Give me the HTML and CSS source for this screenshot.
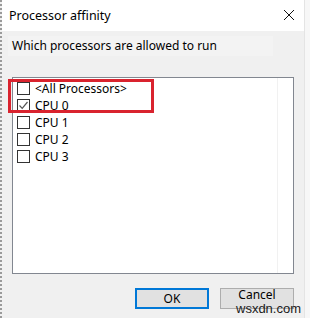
FILE: index.html
```html
<!DOCTYPE html>
<html lang="en">
<head>
    <meta charset="UTF-8">
    <title>Processor affinity</title>
    <link rel="stylesheet" href="styles.css">
</head>
<body>
    <div class="window">
        <div class="titlebar">
            <span class="title">Processor affinity</span>
            <svg class="close" width="12" height="12" viewBox="0 0 12 12">
                <path d="M1 1 L11 11 M11 1 L1 11" stroke="#111" stroke-width="1" fill="none"/>
            </svg>
        </div>
        <div class="label">Which processors are allowed to run</div>
        <div class="listbox">
            <div class="item"><span class="check"></span>&lt;All Processors&gt;</div>
            <div class="item">
                <span class="check">
                    <svg width="11" height="11" viewBox="0 0 11 11">
                        <path d="M1.5 5.5 L4.2 8.3 L9.5 2" stroke="#555" stroke-width="1.2" fill="none"/>
                    </svg>
                </span>CPU 0
            </div>
            <div class="item"><span class="check"></span>CPU 1</div>
            <div class="item"><span class="check"></span>CPU 2</div>
            <div class="item"><span class="check"></span>CPU 3</div>
            <div class="divider"></div>
        </div>
        <div class="buttons">
            <button class="btn default">OK</button>
            <button class="btn"><span class="btn-text">Cancel</span></button>
        </div>
        <div class="highlight"></div>
        <div class="watermark">wsxdn.com</div>
    </div>
</body>
</html>
```

FILE: styles.css
```css
body {
    margin: 0;
    background: #f7f7f7;
    font-family: "Noto Sans", "Open Sans", sans-serif;
    font-size: 12px;
    color: #000;
}
.window {
    position: relative;
    width: 302px;
    height: 318px;
    background: #f0f0f0;
    border-left: 2px dotted #9a9a9a;
    border-right: 1px solid #e4e4e4;
}
.titlebar {
    height: 31px;
    background: #fff;
    display: flex;
    align-items: center;
    justify-content: space-between;
    padding: 0 9px 0 7px;
}
.title {
    font-size: 12.5px;
    padding-bottom: 1px;
}
.close {
    margin-top: -1px;
}
.label {
    margin: 5px 0 0 6px;
    padding-left: 4px;
    width: 261px;
    height: 20px;
    line-height: 19px;
    background: #f3f3f3;
}
.listbox {
    position: relative;
    margin: 21px 0 0 10px;
    width: 280px;
    height: 193px;
    background: #fff;
    border: 1px solid #828790;
    padding-top: 2px;
    box-sizing: content-box;
}
.item {
    display: flex;
    align-items: center;
    height: 17px;
    padding-left: 4px;
    line-height: 17px;
}
.check {
    width: 11px;
    height: 11px;
    border: 1px solid #333;
    background: #fff;
    margin-right: 5px;
    display: flex;
}
.divider {
    position: absolute;
    top: 0;
    bottom: 0;
    left: 264px;
    border-left: 1px solid #f1f1f1;
}
.buttons {
    display: flex;
    justify-content: flex-end;
    gap: 11px;
    margin: 14px 10px 0 0;
}
.btn {
    width: 74px;
    height: 21px;
    background: #e1e1e1;
    border: 1px solid #adadad;
    font-family: "Noto Sans", "Open Sans", sans-serif;
    font-size: 12px;
    padding: 0;
    line-height: 18px;
}
.btn-text {
    display: inline-block;
    line-height: 12px;
    margin-top: -1px;
    vertical-align: top;
}
.btn.default {
    border: 2px solid #0078d7;
}
.highlight {
    position: absolute;
    left: 6px;
    top: 79px;
    width: 140px;
    height: 28px;
    border: 3px solid #d9232e;
}
.watermark {
    position: absolute;
    left: 234px;
    top: 303px;
    font-family: "Liberation Sans", Arial, sans-serif;
    font-size: 13px;
    line-height: 12px;
    color: #1a1a1a;
}
```
